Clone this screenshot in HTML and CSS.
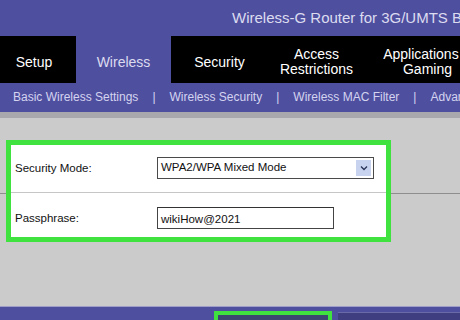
FILE: index.html
```html
<!DOCTYPE html>
<html lang="en">
<head>
    <meta charset="UTF-8">
    <meta name="viewport" content="width=device-width, initial-scale=1.0">
    <title>Wireless Security</title>
    <link rel="stylesheet" href="styles.css">
</head>
<body>
    <header class="top-bar">Wireless-G Router for 3G/UMTS Broadband</header>

    <nav class="main-nav">
        <div class="tab tab-setup">Setup</div>
        <div class="tab tab-wireless active">Wireless</div>
        <div class="tab tab-security">Security</div>
        <div class="tab tab-access">Access<br>Restrictions</div>
        <div class="tab tab-apps">Applications &amp;<br>Gaming</div>
    </nav>

    <div class="sub-nav">
        <span>Basic Wireless Settings</span>
        <span class="sep">|</span>
        <span>Wireless Security</span>
        <span class="sep">|</span>
        <span>Wireless MAC Filter</span>
        <span class="sep">|</span>
        <span>Advanced Wireless Settings</span>
    </div>
    <div class="stripe"></div>

    <main class="content">
        <div class="highlight-box">
            <div class="form-row row-mode">
                <label class="field-label">Security Mode:</label>
                <div class="select">
                    <span class="select-text">WPA2/WPA Mixed Mode</span>
                    <span class="select-arrow">
                        <svg width="8" height="6" viewBox="0 0 8 6"><polyline points="1,1.5 4,4.5 7,1.5" fill="none" stroke="#2a3358" stroke-width="1.3"/></svg>
                    </span>
                </div>
            </div>
            <div class="form-row row-pass">
                <label class="field-label">Passphrase:</label>
                <div class="text-input">wikiHow@2021</div>
            </div>
        </div>
    </main>

    <footer class="bottom-bar">
        <div class="btn-highlight"><div class="btn btn-save"></div></div>
        <div class="btn btn-cancel"></div>
    </footer>
</body>
</html>
```

FILE: styles.css
```css
* {
    margin: 0;
    padding: 0;
    box-sizing: border-box;
    font-family: 'Liberation Sans', Arial, sans-serif;
}

body {
    width: 460px;
    height: 320px;
    overflow: hidden;
    background-color: #cbcbcb;
}

.top-bar {
    height: 36px;
    line-height: 36px;
    padding-left: 232px;
    font-size: 15px;
    color: #dcdcf0;
    background-color: #4f4f9f;
    white-space: nowrap;
    overflow: hidden;
}

.main-nav {
    display: flex;
    height: 47px;
    background-color: #000;
    color: #fff;
    font-size: 14px;
    white-space: nowrap;
    overflow: hidden;
}

.tab {
    flex-shrink: 0;
    display: flex;
    align-items: center;
    justify-content: center;
    text-align: center;
    line-height: 15px;
    padding-top: 5px;
}

.tab-setup { width: 76px; padding-right: 8px; }
.tab-wireless { width: 95px; }
.tab-security { width: 97px; }
.tab-access { width: 97px; }
.tab-apps { width: 125px; }

.tab.active {
    background-color: #4f4f9f;
    color: #dcdcf0;
}

.sub-nav {
    display: flex;
    height: 29px;
    line-height: 29px;
    padding-left: 13px;
    font-size: 12px;
    color: #d4d4f0;
    background-color: #4f4f9f;
    white-space: nowrap;
    overflow: hidden;
}

.sub-nav span {
    flex-shrink: 0;
}

.sub-nav .sep {
    margin: 0 14px;
}

.stripe {
    height: 6px;
    background-color: #a9a9ad;
}

.content {
    height: 188px;
    padding-top: 22px;
    background: linear-gradient(to bottom, #cbcbcb 75px, #8e8e8e 75px, #8e8e8e 76px, #cbcbcb 76px);
}

.highlight-box {
    margin-left: 6px;
    width: 385px;
    height: 102px;
    border: 5px solid #3fe23f;
    background-color: #fff;
}

.form-row {
    display: flex;
    align-items: flex-start;
    font-size: 11.5px;
    color: #111;
}

.row-mode {
    height: 48px;
    padding-top: 12px;
    border-bottom: 1px solid #c6c6c6;
}

.row-pass {
    padding-top: 14px;
}

.field-label {
    width: 146px;
    padding-left: 4px;
    line-height: 22px;
}

.select {
    display: flex;
    align-items: center;
    width: 217px;
    height: 22px;
    border: 1px solid #4a4a4a;
    background-color: #fff;
}

.select-text {
    padding-left: 3px;
    padding-bottom: 3px;
}

.select-arrow {
    display: flex;
    align-items: center;
    justify-content: center;
    width: 15px;
    height: 16px;
    margin-left: auto;
    margin-right: 2px;
    background-color: #c7d3ef;
}

.text-input {
    width: 177px;
    height: 22px;
    line-height: 23px;
    padding-left: 3px;
    border: 1px solid #444;
    border-top-color: #333;
}

.bottom-bar {
    display: flex;
    align-items: flex-start;
    height: 14px;
    padding-left: 214px;
    padding-top: 4px;
    border-top: 1px solid #9e9ec8;
    background-color: #4f4f9f;
}

.btn-highlight {
    width: 118px;
    height: 20px;
    border: 4px solid #3fe23f;
    flex-shrink: 0;
}

.btn {
    height: 100%;
}

.btn-save {
    background-color: #3c4670;
}

.btn-cancel {
    flex-shrink: 0;
    width: 130px;
    height: 20px;
    margin-left: 6px;
    margin-top: 1px;
    background-color: #3e3e80;
    border-top: 1px solid #6a6aa8;
}
```
